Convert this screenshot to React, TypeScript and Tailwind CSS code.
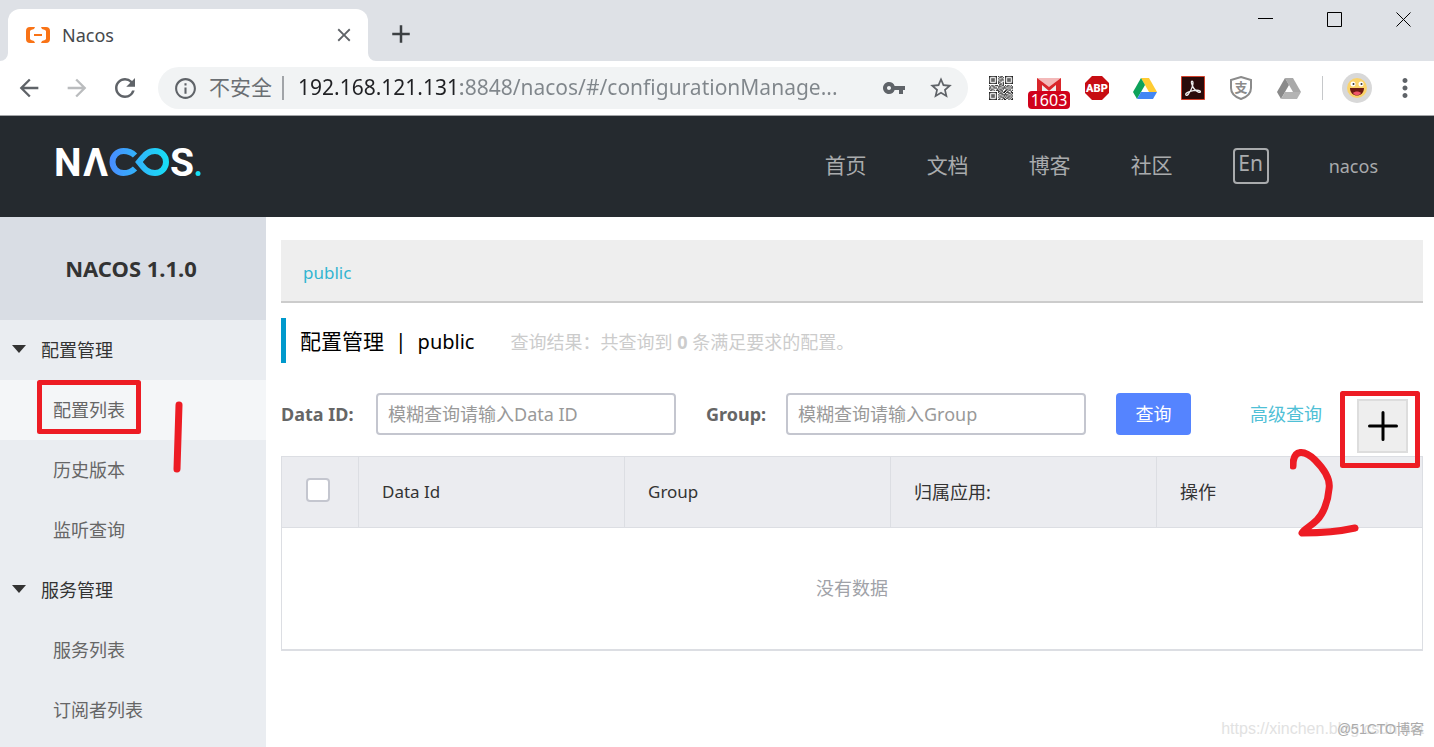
import {
  MdArrowBack,
  MdArrowForward,
  MdClose,
  MdAdd,
  MdInfoOutline,
  MdMoreVert,
  MdRefresh,
  MdStarBorder,
  MdVpnKey,
} from "react-icons/md";

const menu = [
  { title: "配置管理", items: ["配置列表", "历史版本", "监听查询"] },
  { title: "服务管理", items: ["服务列表", "订阅者列表"] },
];

const links = ["首页", "文档", "博客", "社区"];

const qrRows = [
  "111111101011001111111",
  "100000100110101000001",
  "101110101001001011101",
  "101110100111101011101",
  "101110101010001011101",
  "100000101100101000001",
  "111111101010101111111",
  "000000000110100000000",
  "101101110101101011010",
  "010110001110010110101",
  "110011101001111001011",
  "101100010110100110100",
  "011010111011001101101",
  "000000001101011010010",
  "111111101010110111011",
  "100000100111001001101",
  "101110101001111110010",
  "101110100110010101101",
  "101110101011101011010",
  "100000100100110110101",
  "111111101101011001011",
];

function QrIcon() {
  return (
    <svg viewBox="0 0 21 21" className="size-6 fill-[#222]">
      {qrRows.map((row, y) =>
        [...row].map((bit, x) =>
          bit === "1" ? <rect key={`${x}-${y}`} x={x} y={y} width="1" height="1" /> : null
        )
      )}
    </svg>
  );
}

function DriveIcon({ colors }: { colors: [string, string, string] }) {
  return (
    <svg viewBox="0 0 24 21" className="h-[21px] w-6">
      <path d="M8 0h8l8 14h-8z" fill={colors[0]} />
      <path d="M8 0l4 7L4 21 0 14z" fill={colors[1]} />
      <path d="M8 14h16l-4 7H4z" fill={colors[2]} />
    </svg>
  );
}

function Logo() {
  return (
    <svg viewBox="-4 -10 156 54" className="h-[54px] w-[156px]" role="img" aria-label="NACOS">
      <defs>
        <linearGradient id="loop" x1="54" x2="114" y1="0" y2="0" gradientUnits="userSpaceOnUse">
          <stop offset="0" stopColor="#4a8bff" />
          <stop offset="1" stopColor="#16e0f5" />
        </linearGradient>
      </defs>
      <g fill="#fff" fontFamily="Roboto, sans-serif" fontWeight="700" fontSize="39">
        <text x="-1" y="30">N</text>
        <text x="28" y="30">Λ</text>
        <text x="115" y="30">S</text>
      </g>
      <g fill="none" stroke="url(#loop)" strokeWidth="6">
        <path d="M80 9.500C77 6.500 74 5 68.500 5A11 11 0 0 0 68.500 27C74 27 77 25.500 80 22.500" />
        <path d="M84 16C89 10 92 5 100 5A11 11 0 0 1 100 27C92 27 89 22 84 16Z" />
      </g>
      <circle cx="143" cy="27.500" r="2.500" fill="#16e0f5" />
    </svg>
  );
}

function TabStrip() {
  return (
    <div className="flex h-[61px] items-start justify-between bg-[#dee1e6]">
      <div className="flex items-end pt-[9px] pl-2">
        <div className="relative flex h-[52px] w-[360px] items-center rounded-t-xl bg-white pr-[13px] pl-[18px]">
          <svg viewBox="0 0 8 8" className="absolute bottom-0 -left-2 size-2 fill-white">
            <path d="M8 0v8H0a8 8 0 0 0 8-8z" />
          </svg>
          <svg viewBox="0 0 8 8" className="absolute -right-2 bottom-0 size-2 fill-white">
            <path d="M0 0v8h8a8 8 0 0 1-8-8z" />
          </svg>
          <svg viewBox="0 0 24 16" className="h-4 w-6" fill="#f97316">
            <path d="M9 0H4a4 4 0 0 0-4 4v8a4 4 0 0 0 4 4h5l-1-2-3-1-1-1V4l1-1 3-1zM15 0h5a4 4 0 0 1 4 4v8a4 4 0 0 1-4 4h-5l1-2 3-1 1-1V4l-1-1-3-1zM8 7h8v2H8z" />
          </svg>
          <span className="ml-3 flex-1 text-lg text-[#45484c]">Nacos</span>
          <button aria-label="关闭标签页">
            <MdClose className="size-[22px] text-[#5f6368]" />
          </button>
        </div>
        <button aria-label="新标签页" className="mb-3 ml-[18px]">
          <MdAdd className="size-[30px] text-[#3c4043]" />
        </button>
      </div>
      <div className="flex gap-[54px] pt-3 pr-[23px]">
        <button aria-label="最小化">
          <svg viewBox="0 0 15 15" className="size-[15px]"><path d="M0 6.500h15" stroke="#000" /></svg>
        </button>
        <button aria-label="最大化">
          <svg viewBox="0 0 15 15" className="size-[15px]"><path d="M.5.5h14v14H.5z" fill="none" stroke="#000" /></svg>
        </button>
        <button aria-label="关闭">
          <svg viewBox="0 0 15 15" className="size-[15px]"><path d="M.5.5l14 14M14.500.5l-14 14" stroke="#000" /></svg>
        </button>
      </div>
    </div>
  );
}

function Toolbar() {
  return (
    <div className="flex h-[55px] items-center border-b border-[#a3a5a8] bg-white pr-[14px] pl-[15px]">
      <button aria-label="后退"><MdArrowBack className="size-7 text-[#5f6368]" /></button>
      <button aria-label="前进" className="ml-5"><MdArrowForward className="size-7 text-[#babcbe]" /></button>
      <button aria-label="重新加载" className="ml-[19px]"><MdRefresh className="size-[30px] text-[#5f6368]" /></button>
      <div className="ml-[18px] flex h-[42px] min-w-0 flex-1 items-center rounded-full bg-[#f1f3f4] pr-[14px] pl-[15px] text-[21px]">
        <MdInfoOutline className="size-[25px] shrink-0 text-[#5f6368]" />
        <label htmlFor="url" className="ml-[11px] shrink-0 text-[#6b6f73]">不安全</label>
        <span className="ml-[10px] h-6 w-[2px] shrink-0 bg-[#a1a4a8]" />
        <input
          id="url"
          className="ml-[14px] min-w-0 flex-1 bg-linear-to-r from-[#202124] from-[163px] to-[#80868b] to-[163px] bg-clip-text text-transparent outline-none"
          defaultValue="192.168.121.131:8848/nacos/#/configurationManage..."
        />
        <button aria-label="密码"><MdVpnKey className="size-6 text-[#5f6368]" /></button>
        <button aria-label="收藏" className="ml-[22px]"><MdStarBorder className="size-[26px] text-[#5f6368]" /></button>
      </div>
      <div className="ml-[21px] flex items-center gap-6">
        <QrIcon />
        <div className="relative h-6 w-6">
          <svg viewBox="0 0 24 16" className="mt-[2px] h-4 w-6">
            <path d="M0 0h24v16H0z" fill="#eee" />
            <path d="M0 0h24v3L12 11 0 3z" fill="#f3b9b9" />
            <path d="M0 16V0l12 9L24 0v16h-5V7l-7 6-7-6v9z" fill="#d9252a" />
          </svg>
          <span className="absolute top-[15px] -left-[9px] h-[18px] w-[42px] rounded-sm bg-[#d0021b] text-center text-base leading-[18px] text-white">1603</span>
        </div>
        <svg viewBox="0 0 24 24" className="size-6">
          <path d="M7 0h10l7 7v10l-7 7H7l-7-7V7z" fill="#c70d12" />
          <text x="12" y="16" textAnchor="middle" fontFamily="Roboto, sans-serif" fontSize="11" fontWeight="900" fill="#fff">ABP</text>
        </svg>
        <DriveIcon colors={["#fc3", "#0da25a", "#4286f4"]} />
        <svg viewBox="0 0 24 24" className="size-6">
          <path d="M.5.5h23v23H.5z" fill="#2b0b0a" stroke="#d2402b" />
          <path d="M5 17.500c-1 2 1 2.500 2.500.5 2-3 4.500-8 4.500-11 0-2.500-2-2.500-1.500 0C11.500 11 14 14.500 17 16c2 1 3 0 2-1-2-1.500-11-.5-14 2.500z" fill="none" stroke="#eee" strokeWidth="1.300" />
        </svg>
        <svg viewBox="0 0 24 24" className="size-6">
          <path d="M12 1l10 3v8c0 5-4 9-10 11C6 21 2 17 2 12V4z" fill="#fff" stroke="#8b8b8b" strokeWidth="2" />
          <text x="12" y="16" textAnchor="middle" fontSize="13" fontWeight="700" fill="#8b8b8b">支</text>
        </svg>
        <DriveIcon colors={["#a9a9a9", "#8a8a8a", "#b4b4b4"]} />
      </div>
      <span className="ml-[21px] h-6 w-px bg-[#c6c8ca]" />
      <svg viewBox="0 0 30 30" className="ml-[19px] size-[30px]">
        <circle cx="15" cy="15" r="15" fill="#d8d8d8" />
        <circle cx="15" cy="15" r="10" fill="#fbd36a" />
        <circle cx="11" cy="11" r="2.500" fill="#fff" />
        <circle cx="19" cy="11" r="2.500" fill="#fff" />
        <circle cx="11.500" cy="11" r="1" fill="#333" />
        <circle cx="19.500" cy="11" r="1" fill="#333" />
        <path d="M8 15h14c0 10-14 10-14 0z" fill="#6d1a12" />
        <path d="M11 20c2-2 6-2 8 0-2 3-6 3-8 0z" fill="#f0566a" />
      </svg>
      <button aria-label="更多" className="ml-[18px]"><MdMoreVert className="size-[30px] text-[#5f6368]" /></button>
    </div>
  );
}

function Sidebar() {
  return (
    <aside className="w-[266px] shrink-0 bg-[#eaedf1] text-lg">
      <h1 className="flex h-[103px] items-center justify-center bg-[#d9dde4] pr-1 text-[22px] font-bold text-[#333]">
        NACOS 1.1.0
      </h1>
      <nav>
        {menu.map((group) => (
          <div key={group.title}>
            <button className="flex h-[60px] w-full items-center gap-[15px] pl-3 text-[#333]">
              <svg viewBox="0 0 14 8" className="mb-[3px] h-2 w-[14px] fill-[#333]"><path d="M0 0h14L7 8z" /></svg>
              {group.title}
            </button>
            {group.items.map((item) => (
              <a
                key={item}
                href="#"
                className={
                  item === "配置列表"
                    ? "relative flex h-[60px] items-center bg-[#f4f6f8] pl-[53px] text-[#666]"
                    : "flex h-[60px] items-center pl-[53px] text-[#666]"
                }
              >
                {item}
                {item === "配置列表" && (
                  <svg viewBox="0 0 160 96" className="absolute top-0 left-9 z-10 h-24 w-40" fill="none" stroke="#ed1c24">
                    <path d="M3.500 2.500h99v49h-99z" strokeWidth="5" strokeLinejoin="round" />
                    <path d="M143 25l-2 64" strokeWidth="7" strokeLinecap="round" />
                  </svg>
                )}
              </a>
            ))}
          </div>
        ))}
      </nav>
    </aside>
  );
}

function SearchForm() {
  return (
    <form className="mt-[30px] flex h-[42px] items-center text-lg">
      <label htmlFor="dataId" className="w-[95px] shrink-0 font-bold text-[#666]">Data ID:</label>
      <input
        id="dataId"
        placeholder="模糊查询请输入Data ID"
        className="h-full w-[300px] min-w-0 rounded border-2 border-[#c4c6cf] px-[10px] placeholder:text-[#999]"
      />
      <label htmlFor="group" className="ml-[30px] w-20 shrink-0 font-bold text-[#666]">Group:</label>
      <input
        id="group"
        placeholder="模糊查询请输入Group"
        className="h-full w-[300px] min-w-0 rounded border-2 border-[#c4c6cf] px-[10px] placeholder:text-[#999]"
      />
      <button type="button" className="ml-[30px] h-full w-[75px] shrink-0 rounded bg-[#5584ff] text-white">查询</button>
      <div className="ml-auto flex shrink-0 items-center pr-[15px]">
        <a href="#" className="text-[#4fc0d6]">高级查询</a>
        <div className="relative mt-6 ml-[35px]">
          <button
            type="button"
            aria-label="新建配置"
            className="flex h-[54px] w-[51px] items-center justify-center border-2 border-[#ddd] bg-[#eee]"
          >
            <svg viewBox="0 0 30 30" className="size-[30px]" stroke="#000" strokeWidth="3" strokeLinecap="round">
              <path d="M15 1.500v27M1.500 15h27" />
            </svg>
          </button>
          <svg viewBox="0 0 130 150" className="absolute -top-[9px] -left-[67px] z-10 h-[150px] w-[130px] max-w-none" fill="none" stroke="#ed1c24">
            <path d="M52.500 3.500h75v72h-75z" strokeWidth="5" strokeLinejoin="round" />
            <path d="M3 76c0-18 12-16 22-6 8 8 16 18 14 29-1 13-6 25-12 31-7 7-13 9-15 13 18 0 35-1 53-5" strokeWidth="7" strokeLinecap="round" strokeLinejoin="round" />
          </svg>
        </div>
      </div>
    </form>
  );
}

export default function App() {
  return (
    <div className="relative flex min-h-screen flex-col bg-white font-['Noto_Sans','Noto_Sans_CJK_SC',sans-serif]">
      <TabStrip />
      <Toolbar />
      <header className="flex h-[101px] items-center justify-between bg-[#252a2f] pr-14 pl-[51px] text-[#a9abad]">
        <a href="#" className="pb-2"><Logo /></a>
        <nav className="flex items-center gap-[60px] pb-[2px] text-[21px]">
          {links.map((link) => (
            <a key={link} href="#">{link}</a>
          ))}
          <button className="flex size-9 items-center justify-center rounded-sm border-2 border-[#a9abad] pb-1 text-[21px]">En</button>
          <a href="#" className="text-lg">nacos</a>
        </nav>
      </header>
      <div className="flex flex-1">
        <Sidebar />
        <main className="min-w-0 flex-1 pt-[23px] pr-[11px] pl-[15px]">
          <div className="flex h-[63px] items-center border-b-2 border-[#ccc] bg-[#eee] px-[22px] pt-1 text-[17px]">
            <a href="#" className="text-[#33b5d1]">public</a>
          </div>
          <div className="mt-[15px] flex h-[45px] items-center border-l-[5px] border-[#09c] pt-[2px] pl-[14px]">
            <h2 className="flex items-center gap-[11px] text-[21px] text-black">
              <span>配置管理</span>
              <span>|</span>
              <span className="text-xl">public</span>
            </h2>
            <p className="ml-9 text-lg text-[#ccc]">
              查询结果：共查询到 <b>0</b> 条满足要求的配置。
            </p>
          </div>
          <SearchForm />
          <table className="mt-[21px] w-full table-fixed border border-b-2 border-[#dcdee3] text-lg">
            <thead>
              <tr className="h-[71px] bg-[#ebecf0] text-left text-[#333]">
                <th className="w-[77px] border border-[#dcdee3] pb-[5px] pl-6 align-middle">
                  <input
                    type="checkbox"
                    aria-label="全选"
                    className="block size-6 appearance-none rounded border-2 border-[#c4c6cf] bg-white"
                  />
                </th>
                {["Data Id", "Group"].map((name) => (
                  <th key={name} className="border border-[#dcdee3] pl-[23px] text-[17px] font-normal">{name}</th>
                ))}
                {["归属应用:", "操作"].map((name) => (
                  <th key={name} className="border border-[#dcdee3] pl-[23px] font-normal">{name}</th>
                ))}
              </tr>
            </thead>
            <tbody>
              <tr className="h-[122px]">
                <td colSpan={5} className="text-center text-[#a0a2a8]">没有数据</td>
              </tr>
            </tbody>
          </table>
        </main>
      </div>
      <div className="absolute right-[10px] bottom-[6px] flex items-center font-['Liberation_Sans','Noto_Sans_CJK_SC',sans-serif]">
        <span className="text-base text-[#e2e2e2]">https://xinchen.blog.csdn.net</span>
        <span className="absolute right-0 text-sm text-[#aaa]">@51CTO博客</span>
      </div>
    </div>
  );
}
